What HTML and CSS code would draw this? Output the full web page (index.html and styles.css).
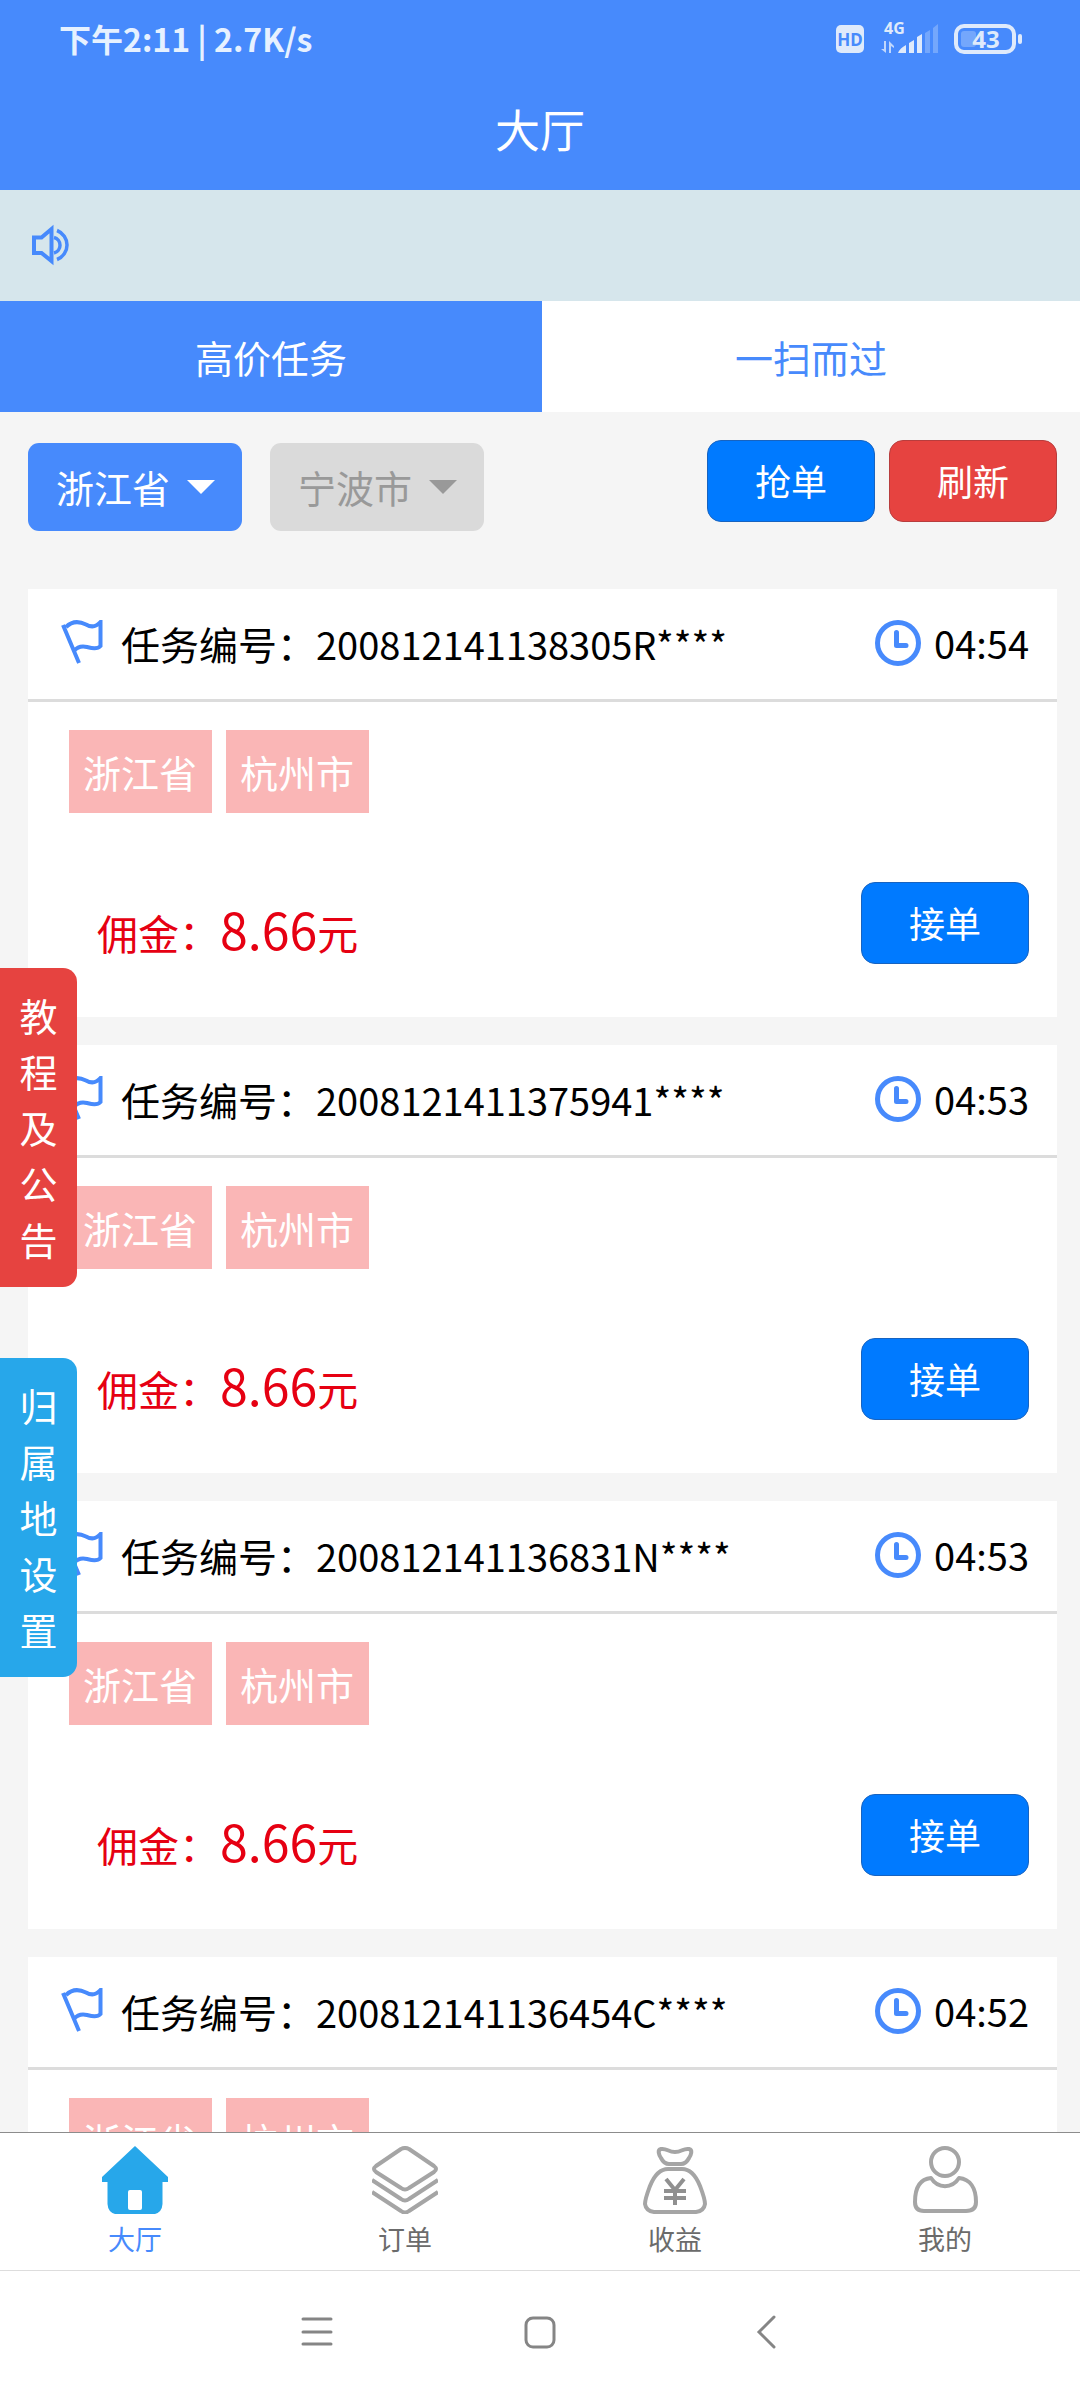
FILE: index.html
```html
<!DOCTYPE html>
<html lang="zh-CN">
<head>
<meta charset="utf-8">
<meta name="viewport" content="width=device-width, initial-scale=1">
<title>大厅</title>
<link rel="stylesheet" href="styles.css">
</head>
<body>
<svg class="sprite" aria-hidden="true">
  <symbol id="flag" viewBox="0 0 42 46">
    <path d="M2 5 18 43M5 7C12 0 20 2 25 4.500C31 8 36 6 39.500 2V26C36 30 30 28 26 27C22 26 17 26 13 31" fill="none" stroke="currentColor" stroke-width="4"/>
  </symbol>
  <symbol id="clock" viewBox="0 0 46 46">
    <circle cx="23" cy="23" r="20.500" fill="none" stroke="currentColor" stroke-width="5"/>
    <path d="M21.500 12.500V25.500H31" fill="none" stroke="currentColor" stroke-width="5" stroke-linecap="round" stroke-linejoin="round"/>
  </symbol>
</svg>

<header class="header">
  <div class="status">
    <span class="status-text">下午2:11 | 2.7K/s</span>
    <svg class="status-icons" width="190" height="36" viewBox="0 0 190 36" fill="#dfeafb">
      <rect x="2" y="5" width="28" height="28" rx="5"/>
      <text class="hd" x="16" y="26" text-anchor="middle">HD</text>
      <text class="net" x="50" y="14">4G</text>
      <path d="M47 29l5 4V21h-2v8zM55 33V21l5 5v2l-3-2v7z" opacity=".8"/>
      <path d="M64 33q2-5 8-8v8zM75 33V23l5-3v13zM83 33V17l5-3v19z"/>
      <path d="M91 33V13l5-3v23zM99 33V8l5-4v29z" opacity=".3"/>
      <rect x="122" y="6" width="58" height="26" rx="8" fill="none" stroke="#dfeafb" stroke-width="4"/>
      <rect x="127" y="11" width="15" height="16" rx="3" opacity=".3"/>
      <rect x="184" y="14" width="4" height="10" rx="2"/>
      <text class="level" x="152" y="28" text-anchor="middle">43</text>
    </svg>
  </div>
  <h1 class="title">大厅</h1>
</header>

<div class="notice">
  <svg width="36" height="36" viewBox="0 0 36 36" fill="none" stroke="currentColor">
    <path d="M2 10.500H9.500L19.500 2V34L9.500 26H2Z" stroke-width="4"/>
    <path d="M22 10.500A8 8 0 0 1 22 26M25 3.500A15.500 15.500 0 0 1 25 32.500" stroke-width="3.500"/>
  </svg>
</div>

<nav class="tabs">
  <button class="tab tab-on" type="button">高价任务</button>
  <button class="tab" type="button">一扫而过</button>
</nav>

<main class="main">
  <div class="filters">
    <span class="select"><select aria-label="省份"><option>浙江省</option></select></span>
    <span class="select select-off"><select aria-label="城市" disabled><option>宁波市</option></select></span>
    <div class="actions">
      <button class="btn" type="button">抢单</button>
      <button class="btn btn-red" type="button">刷新</button>
    </div>
  </div>

  <div class="list">
    <article class="card">
      <div class="card-head">
        <svg class="flag"><use href="#flag"/></svg>
        <h2 class="number"><span class="label">任务编号：</span>200812141138305R****</h2>
        <svg class="clock"><use href="#clock"/></svg>
        <time>04:54</time>
      </div>
      <div class="tags"><span class="tag">浙江省</span><span class="tag">杭州市</span></div>
      <div class="card-foot">
        <p class="fee">佣金：<span class="amount">8.66</span>元</p>
        <button class="btn" type="button">接单</button>
      </div>
    </article>
    <article class="card">
      <div class="card-head">
        <svg class="flag"><use href="#flag"/></svg>
        <h2 class="number"><span class="label">任务编号：</span>2008121411375941****</h2>
        <svg class="clock"><use href="#clock"/></svg>
        <time>04:53</time>
      </div>
      <div class="tags"><span class="tag">浙江省</span><span class="tag">杭州市</span></div>
      <div class="card-foot">
        <p class="fee">佣金：<span class="amount">8.66</span>元</p>
        <button class="btn" type="button">接单</button>
      </div>
    </article>
    <article class="card">
      <div class="card-head">
        <svg class="flag"><use href="#flag"/></svg>
        <h2 class="number"><span class="label">任务编号：</span>200812141136831N****</h2>
        <svg class="clock"><use href="#clock"/></svg>
        <time>04:53</time>
      </div>
      <div class="tags"><span class="tag">浙江省</span><span class="tag">杭州市</span></div>
      <div class="card-foot">
        <p class="fee">佣金：<span class="amount">8.66</span>元</p>
        <button class="btn" type="button">接单</button>
      </div>
    </article>
    <article class="card">
      <div class="card-head">
        <svg class="flag"><use href="#flag"/></svg>
        <h2 class="number"><span class="label">任务编号：</span>200812141136454C****</h2>
        <svg class="clock"><use href="#clock"/></svg>
        <time>04:52</time>
      </div>
      <div class="tags"><span class="tag">浙江省</span><span class="tag">杭州市</span></div>
    </article>
  </div>
</main>

<aside class="side">
  <button class="side-btn side-red" type="button">教程及公告</button>
  <button class="side-btn" type="button">归属地设置</button>
</aside>

<nav class="tabbar">
  <a class="item item-on" href="#hall">
    <svg width="66" height="68" viewBox="0 0 66 68">
      <path d="M33 0 66 31V36H60.500V58Q60 66 53 68H13Q6 66 5.500 58V36H0V31Z" fill="#27a7ea"/>
      <rect x="26" y="44" width="14" height="20" rx="2" fill="#fff"/>
    </svg>
    大厅
  </a>
  <a class="item" href="#orders">
    <svg class="clip" width="66" height="68" viewBox="0 0 66 68" fill="none" stroke="#a5a5a5" stroke-width="4" stroke-linejoin="round">
      <path d="M29 3Q33 1 37 3L62 20Q66 23 62 26L37 42Q33 45 29 42L4 26Q0 23 4 20Z"/>
      <path d="M0 34 29 53Q33 56 37 53L66 34M0 46 29 65Q33 68 37 65L66 46"/>
    </svg>
    订单
  </a>
  <a class="item" href="#income">
    <svg width="66" height="68" viewBox="0 0 66 68" fill="none" stroke="#a5a5a5" stroke-width="4" stroke-linejoin="round">
      <path d="M33 6C26 6 25 2 19 3C15 4 17 9 19 12C21 16 23 18 27 18H39C43 18 45 16 47 12C49 9 51 4 47 3C41 2 40 6 33 6Z"/>
      <path d="M26 23H40C48 23 54 30 58 40C61 48 63 53 63 58Q62 65 54 66H12Q4 65 3 58C3 53 5 48 8 40C12 30 18 23 26 23Z"/>
      <path d="M24 33 33 44 42 33M33 44V59M22 45H44M22 52H44" stroke="#909090"/>
    </svg>
    收益
  </a>
  <a class="item" href="#mine">
    <svg width="66" height="68" viewBox="0 0 66 68" fill="none" stroke="#a5a5a5" stroke-width="4" stroke-linejoin="round">
      <circle cx="33" cy="16" r="14"/>
      <path d="M19 32C26 43 40 43 47 32C58 33 64 42 64 56Q64 65 54 65H12Q3 65 3 56C3 42 8 33 19 32Z"/>
    </svg>
    我的
  </a>
</nav>

<nav class="system">
  <button type="button" aria-label="菜单"><svg width="32" height="34" viewBox="0 0 32 34"><path d="M3 4H31M3 17H31M3 29H31"/></svg></button>
  <button type="button" aria-label="主页"><svg width="32" height="34" viewBox="0 0 32 34"><rect x="2" y="3" width="28" height="29" rx="7"/></svg></button>
  <button type="button" aria-label="返回"><svg width="32" height="34" viewBox="0 0 32 34"><path d="M26 2 11 17 26 32"/></svg></button>
</nav>
</body>
</html>
```
FILE: styles.css
```css
* {
  box-sizing: border-box;
  margin: 0;
}

body {
  position: relative;
  display: flex;
  flex-direction: column;
  height: 100vh;
  background: #f5f5f5;
  color: #000;
  font: 38px/56px "Noto Sans CJK SC", sans-serif;
}

button,
select {
  border: 0;
  font: inherit;
  color: inherit;
  background: none;
  padding: 0;
}

svg {
  display: block;
  flex: none;
  overflow: visible;
}

.clip {
  overflow: hidden;
}

.sprite {
  position: absolute;
  width: 0;
  height: 0;
}

/* Header */
.header {
  height: 190px;
  flex: none;
  background: #478afc;
  color: #fff;
}

.status {
  display: flex;
  align-items: center;
  justify-content: space-between;
  height: 76px;
  padding: 0 56px 0 59px;
}

.status-text {
  color: #e6f1ff;
  font-size: 32px;
  font-weight: 700;
}

.status-icons text {
  font-family: "Noto Sans", sans-serif;
  font-weight: 700;
}

.hd {
  fill: #478afc;
  font-size: 17px;
}

.net {
  font-size: 16px;
}

.level {
  font-size: 24px;
}

.title {
  font-size: 45px;
  font-weight: 400;
  line-height: 106px;
  text-align: center;
}

.notice {
  display: flex;
  align-items: center;
  flex: none;
  height: 111px;
  padding: 0 32px 2px;
  background: #d6e6ec;
  color: #478afc;
}

.tabs {
  display: grid;
  grid-template-columns: 271fr 269fr;
  flex: none;
  height: 111px;
  background: #fff;
}

.tab {
  color: #478afc;
}

.tab-on {
  background: #478afc;
  color: #fff;
}

/* Filters */
.main {
  flex: 1;
  min-height: 0;
  overflow: hidden;
  padding: 28px 23px 0 28px;
}

.filters {
  display: flex;
  gap: 28px;
  height: 149px;
}

.select {
  position: relative;
  width: 214px;
  height: 88px;
  margin-top: 3px;
  border-radius: 11px;
  background: #478afc;
  color: #fff;
}

.select select {
  width: 100%;
  height: 100%;
  padding: 0 0 0 28px;
  appearance: none;
  opacity: 1;
}

.select::after {
  content: "";
  position: absolute;
  top: 37px;
  right: 27px;
  border: 14px solid transparent;
  border-top-color: currentColor;
  border-bottom: 0;
}

.select-off {
  background: #dadada;
  color: #999;
}

.actions {
  display: flex;
  gap: 14px;
  margin-left: auto;
}

.btn {
  width: 168px;
  height: 82px;
  padding-bottom: 2px;
  border: 1px solid #1763c0;
  border-radius: 14px;
  background: #007aff;
  color: #fff;
  font-size: 36px;
}

.btn-red {
  border-color: #b83d3d;
  background: #e64340;
}

/* Task cards */
.list {
  display: flex;
  flex-direction: column;
  gap: 28px;
}

.card {
  background: #fff;
}

.card-head {
  display: flex;
  align-items: center;
  height: 113px;
  padding: 0 28px 2px 33px;
  border-bottom: 3px solid #dcdcdc;
}

.flag {
  width: 42px;
  height: 46px;
  color: #478afc;
}

.number {
  flex: 1;
  padding-left: 18px;
  font-size: 38px;
  font-weight: 400;
}

.label {
  font-size: 39px;
}

.clock {
  width: 46px;
  height: 46px;
  margin-right: 13px;
  color: #478afc;
}

.tags {
  display: flex;
  gap: 14px;
  padding: 28px 41px 0;
}

.tag {
  padding: 14px 15px 13px 14px;
  background: #fab6b6;
  color: #fff;
}

.card-foot {
  display: flex;
  justify-content: space-between;
  padding: 69px 28px 39px 69px;
}

.fee {
  color: #e60012;
  font-size: 41px;
  line-height: 92px;
}

.amount {
  font-size: 50px;
}

/* Floating side buttons */
.side {
  position: absolute;
  top: 968px;
  left: 0;
  display: flex;
  flex-direction: column;
  gap: 71px;
}

.side-btn {
  width: 77px;
  padding: 19px 19px 20px;
  border-radius: 0 14px 14px 0;
  background: #27a7ea;
  color: #fff;
  word-break: break-all;
}

.side-red {
  background: #e64340;
}

/* Bottom bars */
.tabbar {
  display: grid;
  grid-template-columns: repeat(4, 1fr);
  flex: none;
  height: 138px;
  border-top: 1px solid #8c8c8c;
  background: #fff;
}

.item {
  display: flex;
  flex-direction: column;
  align-items: center;
  padding-top: 13px;
  gap: 7px;
  color: #6b6b6b;
  font-size: 27px;
  line-height: 36px;
  text-decoration: none;
}

.item-on {
  color: #478afc;
}

.system {
  display: flex;
  align-items: center;
  justify-content: center;
  gap: 192px;
  flex: none;
  height: 130px;
  padding-bottom: 8px;
  border-top: 1px solid #ddd;
  background: #fff;
}

.system svg {
  fill: none;
  stroke: #858585;
  stroke-width: 3;
  stroke-linecap: round;
}
```
